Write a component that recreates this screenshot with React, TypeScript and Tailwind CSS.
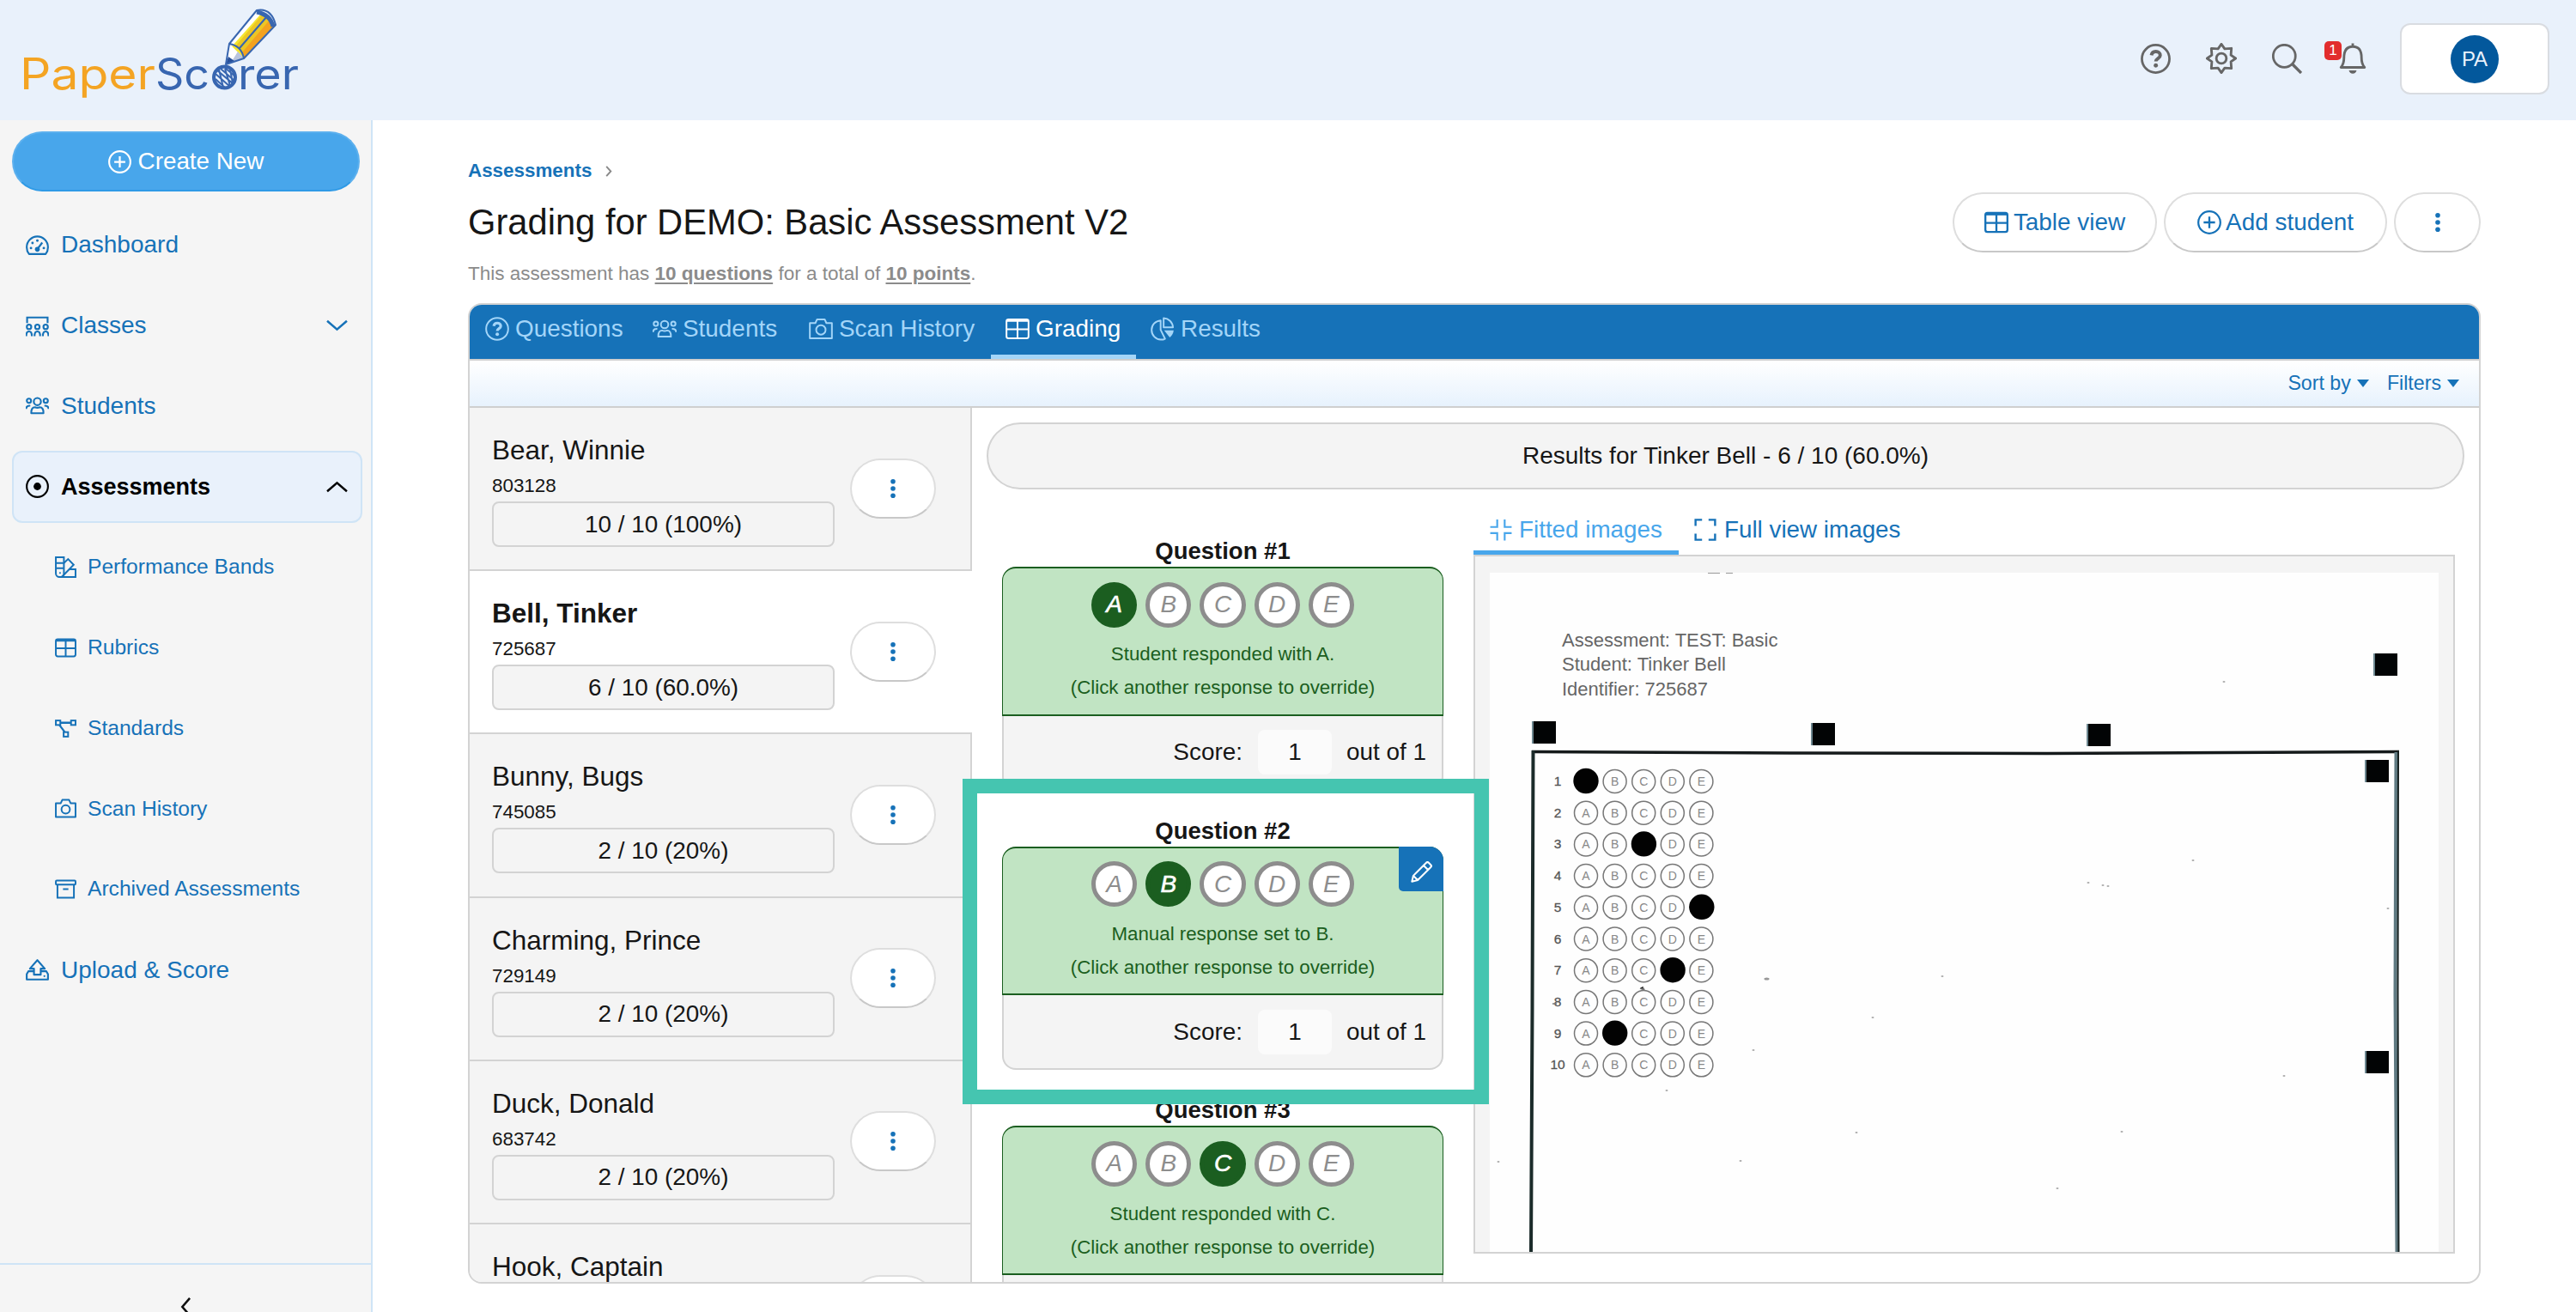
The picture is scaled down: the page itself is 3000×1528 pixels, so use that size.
import clsx from 'clsx';
import type { ReactNode } from 'react';

type IconProps = { className?: string; sw?: number };

function Svg({
  className,
  sw = 1.7,
  children,
}: IconProps & { children: ReactNode }) {
  return (
    <svg
      viewBox="0 0 24 24"
      fill="none"
      stroke="currentColor"
      strokeWidth={sw}
      className={clsx('shrink-0', className)}
    >
      {children}
    </svg>
  );
}

const PlusCircleIcon = (p: IconProps) => (
  <Svg {...p}>
    <circle cx="12" cy="12" r="11" />
    <path d="M12 6.3v11.4M6.3 12h11.4" strokeWidth="2" />
  </Svg>
);

const QuestionIcon = (p: IconProps) => (
  <Svg {...p}>
    <circle cx="12" cy="12" r="11" />
    <path d="M8.6 9.2c.3-2 1.7-3 3.5-3 2 0 3.5 1.2 3.5 3 0 2.5-3.5 2.5-3.5 4.9" strokeWidth="2.7" />
    <circle cx="12.1" cy="17.3" r="1.7" fill="currentColor" stroke="none" />
  </Svg>
);

const GaugeIcon = (p: IconProps) => (
  <Svg {...p}>
    <path d="M3.4 21.2C1.8 19.3 1 17 1 14.2 1 8 6 3 12 3s11 5 11 11.2c0 2.8-.8 5.100-2.400 7z" strokeLinejoin="round" />
    <g fill="currentColor" stroke="none">
      <circle cx="12" cy="7.3" r="1.3" />
      <circle cx="7" cy="9.8" r="1.3" />
      <circle cx="5.4" cy="15" r="1.3" />
      <circle cx="18.7" cy="15" r="1.3" />
      <circle cx="12" cy="16.3" r="2.5" />
    </g>
    <path d="M12.5 15.5l4.6-6.2" strokeWidth="2" />
  </Svg>
);

const ClassIcon = (p: IconProps) => (
  <Svg {...p}>
    <path d="M1.4 9V3.3h21.2V9" />
    {[3.4, 12, 20.6].map((x) => (
      <g key={x} transform={`translate(${x} 0)`}>
        <circle cx="0" cy="13" r="2.3" />
        <path d="M-2.9 22.6c0-3 1-4.8 2.900-4.800s2.900 1.800 2.900 4.800" />
      </g>
    ))}
  </Svg>
);

const PeopleIcon = (p: IconProps) => (
  <Svg {...p}>
    <circle cx="3.3" cy="6.9" r="2.2" />
    <circle cx="20.7" cy="6.9" r="2.2" />
    <circle cx="12" cy="7.7" r="3.7" />
    <path d="M5.7 19.8c-.3-4 1.3-6.2 3.8-6.2 1.6.7 3.4.7 5 0 2.5 0 4.100 2.200 3.800 6.200z" strokeLinejoin="round" />
    <path d="M.4 15.300c.1-2.200 1.500-3.500 4.300-3.300M23.600 15.300c-.1-2.200-1.500-3.500-4.300-3.300" />
  </Svg>
);

const TargetIcon = (p: IconProps) => (
  <Svg {...p}>
    <circle cx="12" cy="12" r="11" />
    <circle cx="12" cy="12" r="3.9" fill="currentColor" stroke="none" />
  </Svg>
);

const SwatchIcon = (p: IconProps) => (
  <Svg {...p}>
    <path d="M1 1h9v18.500a3.500 3.500 0 0 1-3.500 3.500H5a4 4 0 0 1-4-4zM1 7.500h9M1 13.300h9" />
    <path d="M10 7.500L14.700 3l6.200 6.300L8 22.500M16.500 14.500H23V23H6" />
    <circle cx="5.7" cy="18.5" r="1" fill="currentColor" stroke="none" />
  </Svg>
);

const TableIcon = (p: IconProps) => (
  <Svg {...p}>
    <rect x="1" y="2.5" width="22" height="19" rx="2" />
    <path d="M1 4h22" strokeWidth="2" />
    <path d="M12 3v18M1 12.5h22" />
  </Svg>
);

const NodesIcon = (p: IconProps) => (
  <Svg {...p}>
    <rect x="1" y="3" width="5" height="5" />
    <rect x="18" y="3" width="5" height="5" />
    <rect x="9.7" y="16" width="5" height="5" />
    <path d="M6 5.5h12M5 8l6 8" strokeWidth="2.2" />
  </Svg>
);

const CameraIcon = (p: IconProps) => (
  <Svg {...p}>
    <path d="M1 6.2h5.500L8.200 2.500h7.600l1.700 3.700H23v15.300H1z" strokeLinejoin="round" />
    <circle cx="12" cy="13" r="4.7" />
  </Svg>
);

const ArchiveIcon = (p: IconProps) => (
  <Svg {...p}>
    <rect x="1" y="2.5" width="22" height="4.5" rx="1" />
    <path d="M2.8 7v14.500h18.400V7M9 12h6" />
  </Svg>
);

const UploadIcon = (p: IconProps) => (
  <Svg {...p}>
    <path d="M12 2L4.300 10.800h4.200V17h7v-6.200h4.200z" strokeLinejoin="round" />
    <path d="M8.500 13.500H2.700L1 16.500V22h22v-5.500l-1.700-3h-5.800" strokeLinejoin="round" />
    <circle cx="19.3" cy="18.5" r="1" fill="currentColor" stroke="none" />
  </Svg>
);

const PieIcon = (p: IconProps) => (
  <Svg {...p}>
    <path d="M10 3.600C4.800 4 1 8 1 13c0 5.500 4 9.300 9.200 9.800 1.600 0 2.900-.2 4.200-.9L10 13z" strokeLinejoin="round" />
    <path d="M13 1.300v9.200h9.300C22 5.300 18 1.600 13 1.300z" strokeLinejoin="round" />
    <path d="M13.500 13.600H23c-.3 3-1.600 5.200-3.900 6.900z" fill="currentColor" stroke="none" />
  </Svg>
);

const GearIcon = (p: IconProps) => (
  <Svg {...p}>
    <circle cx="12" cy="12" r="3.9" />
    <path
      d="M12 .9L14.600 4.600 19.800 4.200 19.400 9.400 23.100 12 19.400 14.600 19.800 19.800 14.600 19.400 12 23.100 9.400 19.400 4.200 19.800 4.600 14.600.9 12 4.600 9.400 4.200 4.200 9.400 4.600z"
      strokeLinejoin="round"
    />
  </Svg>
);

const SearchIcon = (p: IconProps) => (
  <Svg {...p}>
    <circle cx="9.8" cy="9.8" r="8.9" />
    <path d="M16.3 16.3l7 7" strokeWidth="2.3" />
  </Svg>
);

const BellIcon = (p: IconProps) => (
  <Svg {...p}>
    <path d="M12 .3v2.500M2.800 19h18.400c-1.800-2-2.400-4-2.400-7.500 0-5.500-2-8.700-6.800-8.700s-6.800 3.200-6.800 8.700C5.200 15 4.600 17 2.800 19z" strokeLinejoin="round" />
    <path d="M9 21.300h6c-.4 1.600-1.400 2.500-3 2.500s-2.600-.9-3-2.500z" fill="currentColor" stroke="none" />
  </Svg>
);

const ShrinkIcon = (p: IconProps) => (
  <Svg {...p}>
    <path d="M.5 9h7.500V1M23.500 9H16V1M.5 15.500h7.500v8M23.500 15.500H16v8" />
  </Svg>
);

const ExpandIcon = (p: IconProps) => (
  <Svg {...p}>
    <path d="M8.500 1.300h-7v6.500M15.500 1.300h7v6.500M8.500 22.700h-7v-6.500M15.500 22.700h7v-6.500" />
  </Svg>
);

const PencilIcon = (p: IconProps) => (
  <Svg {...p}>
    <path d="M1.300 22.700l1.500-6.500L17.300 1.700c.8-.8 1.900-.8 2.700 0l2.300 2.300c.8.8.8 1.900 0 2.700L7.800 21.200zM14.300 4.700l5 5M2.800 16.200l5 5" strokeLinejoin="round" />
  </Svg>
);

const ChevronIcon = (p: IconProps) => (
  <Svg {...p}>
    <path d="M1 6.500l11 9.500 11-9.500" />
  </Svg>
);

function Dots() {
  return (
    <svg viewBox="0 0 8 24" className="h-6 w-2 fill-[#1672b8]">
      <circle cx="4" cy="3.7" r="2.8" />
      <circle cx="4" cy="12" r="2.8" />
      <circle cx="4" cy="20.3" r="2.8" />
    </svg>
  );
}

function Caret() {
  return (
    <svg viewBox="0 0 14 9" className="h-[9px] w-3.5 fill-[#1672b8]">
      <path d="M0 0h14L7 9z" />
    </svg>
  );
}

function Logo() {
  return (
    <svg width="360" height="130" viewBox="0 0 360 130" className="font-[Inter,sans-serif]">
      <text x="23" y="104" fontSize="50" fill="#f4a423" textLength="158" lengthAdjust="spacingAndGlyphs">
        Paper
      </text>
      <text x="181" y="104" fontSize="50" fill="#3866b0" textLength="63" lengthAdjust="spacingAndGlyphs">
        Sc
      </text>
      <circle cx="261.5" cy="90" r="12.5" fill="#e9f1fb" stroke="#3866b0" strokeWidth="4" />
      <path
        d="M251 86l17 15M251 92l11 10M253 82l19 16M257 80l16 14M262 79l12 10M255 81l5 21M262 80l6 20M268 81l3 16"
        stroke="#3866b0"
        strokeWidth="2"
      />
      <text x="277" y="104" fontSize="50" fill="#3866b0" textLength="71" lengthAdjust="spacingAndGlyphs">
        rer
      </text>
      <path d="M267 51L299 13l22 17-37 38z" fill="#f5e62f" />
      <path d="M279 57L312 20l9 9-37 39z" fill="#f3a21f" />
      <path d="M274 54L306 16l9 6-33 39z" fill="#ecc624" />
      <path d="M267 51L299 13l5 3-34 38z" fill="#fff" />
      <path d="M267 51l17 17-21 7z" fill="#fff" />
      <path d="M277 60l7 8-15 5z" fill="#b9c4dc" />
      <path d="M263 75l3-9 7 5z" fill="#27509a" />
      <path d="M299 14q16 3 19 17" fill="none" stroke="#3866b0" strokeWidth="5" />
      <path
        d="M267 51L299 12q17-3 22 17L284 68l-21 7zM267 51q14 2 17 17M279 56l32-37"
        fill="none"
        stroke="#3866b0"
        strokeWidth="2"
        strokeLinejoin="round"
      />
    </svg>
  );
}

function Header() {
  return (
    <header className="flex h-[140px] shrink-0 bg-[#e9f1fb]">
      <Logo />
      <div className="ml-auto flex pt-[27px] pr-[31px] text-[#666]">
        <div className="flex h-[82px] items-center gap-[41px]">
          <QuestionIcon className="size-[35px]" sw={1.9} />
          <GearIcon className="size-[36px]" sw={1.9} />
          <SearchIcon className="size-[35px]" sw={1.9} />
          <div className="relative">
            <BellIcon className="size-[36px]" sw={1.9} />
            <span className="absolute -top-[2px] -left-[15px] flex h-[22px] w-5 items-center justify-center rounded-[5px] bg-[#e22d2d] text-[17px] text-white">
              1
            </span>
          </div>
        </div>
        <div className="ml-[37px] flex h-[83px] w-[174px] items-center justify-center rounded-xl border-2 border-[#d9dce1] bg-white">
          <span className="flex size-[56px] items-center justify-center rounded-full bg-[#03589c] text-[24px] text-[#e9f1fb]">
            PA
          </span>
        </div>
      </div>
    </header>
  );
}

type NavItem = {
  label: string;
  icon: (p: IconProps) => ReactNode;
  sub?: boolean;
  chevron?: boolean;
  active?: boolean;
};

const navItems: NavItem[] = [
  { label: 'Dashboard', icon: GaugeIcon },
  { label: 'Classes', icon: ClassIcon, chevron: true },
  { label: 'Students', icon: PeopleIcon },
  { label: 'Assessments', icon: TargetIcon, chevron: true, active: true },
  { label: 'Performance Bands', icon: SwatchIcon, sub: true },
  { label: 'Rubrics', icon: TableIcon, sub: true },
  { label: 'Standards', icon: NodesIcon, sub: true },
  { label: 'Scan History', icon: CameraIcon, sub: true },
  { label: 'Archived Assessments', icon: ArchiveIcon, sub: true },
  { label: 'Upload & Score', icon: UploadIcon },
];

function Sidebar() {
  return (
    <aside className="flex w-[434px] shrink-0 flex-col border-r-2 border-[#cfe4f6] bg-[#f5f5f5] text-[#1672b8]">
      <button className="mt-[13px] ml-3.5 flex h-[70px] w-[405px] items-center justify-center gap-2 rounded-full border-2 border-[#5cb0ee] border-b-[#2f9ae6] bg-[#48a6eb] text-[27.8px] text-white">
        <PlusCircleIcon className="size-[27px]" sw={1.9} />
        Create New
      </button>
      <nav className="mt-[15.500px] ml-3.5 w-[408px]">
        {navItems.map(({ label, icon: Icon, sub, chevron, active }) => (
          <div key={label} className="h-[93.8px] py-[5px]">
            <div
              className={clsx(
                'flex h-full items-center rounded-xl border-2 pr-[15px]',
                sub ? 'gap-[13px] pl-[48px] text-[24.6px]' : 'gap-3.5 pl-3.5',
                active
                  ? 'border-[#cfe4f6] bg-[#e9f1fb] text-[27px] font-bold text-black'
                  : 'border-transparent',
                !active && !sub && 'text-[28px]',
              )}
            >
              <Icon className={sub ? 'size-[25px]' : 'size-[27px]'} sw={1.9} />
              {label}
              {chevron && (
                <ChevronIcon
                  sw={2.4}
                  className={clsx('ml-auto size-[25px]', active && 'rotate-180')}
                />
              )}
            </div>
          </div>
        ))}
      </nav>
      <div className="mt-auto flex h-[57px] justify-center border-t-2 border-[#cfe4f6] pt-[38px] text-[#111]">
        <ChevronIcon sw={2.8} className="size-[22px] rotate-90" />
      </div>
    </aside>
  );
}

const pill =
  'flex items-center justify-center rounded-full border-2 border-[#dedede] border-b-[#c8c8c8] bg-white';

function PageHeading() {
  return (
    <div className="flex h-[213px] pr-[111px]">
      <div className="pt-[42px]">
        <div className="flex h-[34px] items-center gap-[16px] text-[22.4px] font-bold text-[#1672b8]">
          Assessments
          <svg viewBox="0 0 8 14" className="h-[13px] w-2 fill-none stroke-[#888] stroke-2">
            <path d="M1 1l5.500 6L1 13" />
          </svg>
        </div>
        <h1 className="mt-[18px] h-[50px] text-[41.7px] leading-[50px] text-[#161616]">
          Grading for DEMO: Basic Assessment V2
        </h1>
        <p className="mt-5 h-[30px] text-[22.5px] leading-[30px] text-[#8b8b8b]">
          This assessment has <b className="underline decoration-2 underline-offset-3">10 questions</b> for a total of{' '}
          <b className="underline decoration-2 underline-offset-3">10 points</b>.
        </p>
      </div>
      <div className="mt-[84px] ml-auto flex h-[70px] gap-2 text-[27.9px] text-[#1672b8]">
        <button className={clsx(pill, 'w-[238px] gap-1.5')}>
          <TableIcon className="size-7" sw={2} />
          Table view
        </button>
        <button className={clsx(pill, 'w-[260px] gap-[5px]')}>
          <PlusCircleIcon className="size-7" sw={1.9} />
          Add student
        </button>
        <button className={clsx(pill, 'w-[101px]')}>
          <Dots />
        </button>
      </div>
    </div>
  );
}

function TabBar() {
  const tabs = [
    { label: 'Questions', icon: QuestionIcon, width: 'w-[195px]' },
    { label: 'Students', icon: PeopleIcon, width: 'w-[182px]' },
    { label: 'Scan History', icon: CameraIcon, width: 'w-[229px]' },
    { label: 'Grading', icon: TableIcon, width: 'w-[169px]', active: true },
    { label: 'Results', icon: PieIcon, width: 'w-[165px]' },
  ];
  return (
    <div className="flex h-[63px] shrink-0 bg-[#1672b8] pl-px text-[27.9px]">
      {tabs.map(({ label, icon: Icon, width, active }) => (
        <div
          key={label}
          className={clsx(
            'flex shrink-0 items-center gap-[7px] border-b-[5px] pb-[2px] pl-[17px] whitespace-nowrap',
            width,
            active ? 'border-[#a3d5f8] text-white' : 'border-transparent text-[#a3d5f8]',
          )}
        >
          <Icon className="size-7" />
          {label}
        </div>
      ))}
    </div>
  );
}

const students = [
  { name: 'Bear, Winnie', id: '803128', score: '10 / 10 (100%)' },
  { name: 'Bell, Tinker', id: '725687', score: '6 / 10 (60.0%)', selected: true },
  { name: 'Bunny, Bugs', id: '745085', score: '2 / 10 (20%)' },
  { name: 'Charming, Prince', id: '729149', score: '2 / 10 (20%)' },
  { name: 'Duck, Donald', id: '683742', score: '2 / 10 (20%)' },
  { name: 'Hook, Captain', id: '', score: '' },
];

function StudentList() {
  return (
    <div className="w-[585px] shrink-0 overflow-hidden">
      {students.map((s) => (
        <div
          key={s.name}
          className={clsx(
            'flex h-[190.2px] items-center border-b-2 border-[#d3d3d3] pl-[26px]',
            s.selected ? 'bg-white' : 'border-r-2 bg-[#f4f4f4]',
          )}
        >
          <div className="h-[162px] w-[399px] pt-[13px] text-[#161616]">
            <div
              className={clsx(
                'h-[46px] leading-[46px]',
                s.selected ? 'text-[31.5px] font-bold' : 'text-[31.5px]',
              )}
            >
              {s.name}
            </div>
            <div className="mt-1 h-[30px] text-[22.4px] leading-[30px]">{s.id}</div>
            <div className="mt-[3px] flex h-[53px] items-center justify-center rounded-lg border-2 border-[#d3d3d3] bg-[#f4f4f4] text-[27.9px]">
              {s.score}
            </div>
          </div>
          <button className={clsx(pill, 'mb-px ml-[18px] h-[70px] w-[100px]')}>
            <Dots />
          </button>
        </div>
      ))}
    </div>
  );
}

const letters = ['A', 'B', 'C', 'D', 'E'];

const questions = [
  { num: 1, answer: 'A', note: 'Student responded with A.' },
  { num: 2, answer: 'B', note: 'Manual response set to B.', manual: true },
  { num: 3, answer: 'C', note: 'Student responded with C.' },
];

function QuestionCard({ num, answer, note, manual }: (typeof questions)[number]) {
  return (
    <div className="mb-[30.200px] h-[295.500px]">
      <div className="h-[34px] text-center text-[27.5px] leading-[32px] font-bold text-[#161616]">
        Question #{num}
      </div>
      <div className="relative h-[173.500px] rounded-t-2xl border-x border-y-2 border-[#1b5e20] bg-[#c1e4c3] pt-[15.500px] text-center text-[22.3px] text-[#1b5e20]">
        <div className="flex justify-center gap-2.5">
          {letters.map((l) => (
            <span
              key={l}
              className={clsx(
                'flex size-[53.200px] items-center justify-center rounded-full border-[5px] text-[28px] italic',
                l === answer
                  ? 'border-[#1b5e20] bg-[#1b5e20] text-white [-webkit-text-stroke:0.6px_white]'
                  : 'border-[#8d8d8d] bg-white text-[#8d8d8d]',
              )}
            >
              {l}
            </span>
          ))}
        </div>
        <div className="mt-[11.500px] leading-[39px]">
          {note}
          <br />
          (Click another response to override)
        </div>
        {manual && (
          <span className="absolute -top-[2px] -right-px flex size-[52px] items-center justify-center rounded-tr-2xl rounded-bl-[5px] bg-[#1672b8] pt-2 text-white">
            <PencilIcon className="size-[25px]" sw={2} />
          </span>
        )}
      </div>
      <div className="flex h-[87px] items-center justify-end rounded-b-2xl border-2 border-t-0 border-[#d3d3d3] bg-[#f4f4f4] pr-[18px] text-[27.9px] text-[#161616]">
        Score:
        <span className="mr-[17px] ml-[18px] flex h-[52px] w-[86px] items-center justify-center rounded-lg bg-[#fbfbfb]">
          1
        </span>
        out of 1
      </div>
    </div>
  );
}

const filled: Record<number, string> = { 1: 'A', 3: 'C', 5: 'E', 7: 'D', 9: 'B' };

const markers = [
  [50, 173],
  [375, 175],
  [696, 176],
  [1030, 94],
  [1020, 218],
  [1020, 557],
];

const specks = [
  [855, 127], [819, 335], [697, 361], [714, 364], [720, 365], [1046, 391],
  [736, 651], [661, 717], [925, 586], [206, 603], [292, 685], [427, 652],
  [307, 556], [527, 470], [446, 518], [10, 686],
];

// The scanned answer sheet
function ScanSheet() {
  return (
    <svg width="1105" height="791" viewBox="0 0 1105 791" className="font-['Liberation_Sans',Arial,sans-serif]">
      <rect width="1105" height="791" fill="#fefefe" />
      <path d="M254 .5h14M275 .5h8" stroke="#999" strokeWidth="1" />
      <g fontSize="22" fill="#666">
        <text x="84" y="85.500">Assessment: TEST: Basic</text>
        <text x="84" y="114">Student: Tinker Bell</text>
        <text x="84" y="142.500">Identifier: 725687</text>
      </g>
      {markers.map(([x, y]) => (
        <g key={`${x}-${y}`}>
          <rect x={x - 1} y={y} width="28" height="26" fill="#6d8790" />
          <rect x={x + 1} y={y} width="26" height="26" fill="#020405" />
        </g>
      ))}
      <path d="M49 208.500l300 1.500 300 .5 410-2" stroke="#151a1b" strokeWidth="3.500" fill="none" />
      <path d="M50.500 207l-1 300-1.500 284" stroke="#1b2b2a" strokeWidth="4" fill="none" />
      <path d="M1055.500 209l-1 282 2 300" stroke="#5f7a82" strokeWidth="4" fill="none" />
      <path d="M1058 207l-.5 282 1 302" stroke="#16201f" strokeWidth="2" fill="none" />
      {Array.from({ length: 10 }, (_, i) => i + 1).map((n) => {
        const y = 243 + (n - 1) * 36.7;
        return (
          <g key={n} textAnchor="middle">
            <text x="79" y={y + 5} fontSize="15.500" fill="#555" stroke="#555" strokeWidth=".3">
              {n}
            </text>
            {letters.map((l, j) =>
              filled[n] === l ? (
                <circle key={l} cx={112 + j * 33.7} cy={y - 0.5} r="14.700" fill="#020202" />
              ) : (
                <g key={l}>
                  <circle cx={112 + j * 33.6} cy={y} r="13.500" fill="none" stroke="#777" strokeWidth="1.500" />
                  <text x={112 + j * 33.6} y={y + 5} fontSize="14" fill="#888">
                    {l}
                  </text>
                </g>
              ),
            )}
          </g>
        );
      })}
      {specks.map(([x, y]) => (
        <ellipse key={`${x}-${y}`} cx={x} cy={y} rx="1.500" ry="1" fill="#aaa" />
      ))}
      <path d="M175 484l5 2-2-4M73 502h5" stroke="#777" strokeWidth="1.500" />
      <ellipse cx="322.500" cy="473" rx="3" ry="1.500" fill="#999" />
    </svg>
  );
}

function ImagePanel() {
  return (
    <div className="w-[1143px] shrink-0">
      <div className="flex h-[76px] pt-[22px] text-[27.8px] text-[#1672b8]">
        <div className="flex h-[54px] w-[239px] items-center gap-2 border-b-[5px] border-[#48a6eb] pl-[19px] text-[#48a6eb]">
          <ShrinkIcon className="size-[26px]" sw={2} />
          Fitted images
        </div>
        <div className="flex h-[49px] items-center gap-[9px] pl-[18px]">
          <ExpandIcon className="size-[26px]" sw={2.2} />
          Full view images
        </div>
      </div>
      <div className="h-[814px] border-2 border-[#d3d3d3] bg-[#f4f4f4] px-[17px] pt-[19px]">
        <ScanSheet />
      </div>
    </div>
  );
}

function GradingPanel() {
  return (
    <div className="relative flex h-[1142px] w-[2344px] flex-col rounded-2xl border-2 border-[#d3d3d3] bg-white">
      <div className="flex min-h-0 flex-1 flex-col overflow-hidden rounded-[14px]">
        <TabBar />
        <div className="flex h-[57px] shrink-0 items-center justify-end gap-[21px] border-y-2 border-[#cfcfcf] bg-linear-to-b from-white to-[#e7f2fd] pr-[23px] text-[23.2px] text-[#1672b8]">
          <span className="flex items-center gap-[7px]">
            Sort by <Caret />
          </span>
          <span className="flex items-center gap-[7px]">
            Filters <Caret />
          </span>
        </div>
        <div className="flex min-h-0 flex-1 overflow-hidden">
          <StudentList />
          <div className="flex-1 px-[17px] pt-[17px]">
            <div className="flex h-[78px] items-center justify-center rounded-full border-2 border-[#d3d3d3] bg-[#f4f4f4] text-[28px] text-[#161616]">
              Results for Tinker Bell - 6 / 10 (60.0%)
            </div>
            <div className="flex pl-[18px]">
              <div className="mr-[35px] w-[514px] shrink-0 pt-[56px]">
                {questions.map((q) => (
                  <QuestionCard key={q.num} {...q} />
                ))}
              </div>
              <ImagePanel />
            </div>
          </div>
        </div>
      </div>
      {/* callout around the manually graded question */}
      <div className="absolute top-[552px] left-[574px] h-[379px] w-[613px] border-[17.500px] border-[#45c5b0]" />
    </div>
  );
}

export default function App() {
  return (
    <div className="flex h-[1528px] w-[3000px] flex-col overflow-hidden bg-white font-['Liberation_Sans',Arial,sans-serif]">
      <Header />
      <div className="flex min-h-0 flex-1">
        <Sidebar />
        <main className="flex-1 pl-[111px]">
          <PageHeading />
          <GradingPanel />
        </main>
      </div>
    </div>
  );
}
